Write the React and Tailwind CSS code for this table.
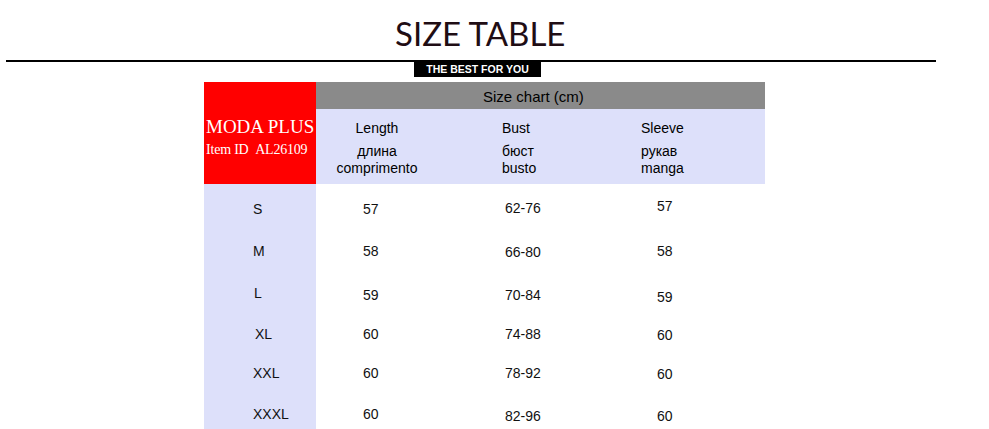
const rows = [
  { size: "S", len: "57", bust: "62-76", sleeve: "57", h: "h-[48px]", sizeCls: "pt-[2px]", lenCls: "pt-[2px]", bustCls: "", sleeveCls: "pb-[4px]" },
  { size: "M", len: "58", bust: "66-80", sleeve: "58", h: "h-[38px]", sizeCls: "", lenCls: "", bustCls: "pt-[1px]", sleeveCls: "" },
  { size: "L", len: "59", bust: "70-84", sleeve: "59", h: "h-[49px]", sizeCls: "pb-[3px] pl-[50px]", lenCls: "", bustCls: "pt-[1px]", sleeveCls: "pt-[4px]" },
  { size: "XL", len: "60", bust: "74-88", sleeve: "60", h: "h-[29px]", sizeCls: "pl-[51px]", lenCls: "", bustCls: "pt-[1px]", sleeveCls: "pt-[3px]" },
  { size: "XXL", len: "60", bust: "78-92", sleeve: "60", h: "h-[50px]", sizeCls: "", lenCls: "", bustCls: "", sleeveCls: "pt-[1px]" },
  { size: "XXXL", len: "60", bust: "82-96", sleeve: "60", h: "h-[31px]", sizeCls: "pl-[48px] pt-[1px]", lenCls: "pt-[1px]", bustCls: "pt-[5px]", sleeveCls: "pt-[5px]" },
]

const App = () => {
  return (
    <div className="w-[989px] h-[429px] overflow-hidden bg-white text-[#111] font-['Liberation_Sans',Arial,sans-serif]">
      {/* Title */}
      <div className="pt-[17px] pl-[395px] h-[60px]">
        <h1 className="text-[33px] leading-none font-normal text-[#1f0d14] font-['Lato',sans-serif]">
          SIZE TABLE
        </h1>
      </div>
      <div className="ml-[6px] w-[930px] h-[2px] bg-black" />
      <div className="ml-[414px] w-[127px] h-[15px] bg-black flex items-center justify-center">
        <span className="text-white text-[10.5px] font-bold leading-none">THE BEST FOR YOU</span>
      </div>

      {/* Table */}
      <div className="mt-[5px] ml-[204px]">
        <div className="flex">
          <div className="w-[112px] h-[102px] bg-[#ff0000] pl-[2px] pt-[34px] text-white font-['Liberation_Serif','Times_New_Roman',serif] whitespace-nowrap">
            <div className="text-[19px] leading-[21px]">MODA PLUS</div>
            <div className="mt-[5px] text-[14px] leading-[16px] tracking-[-0.2px]">Item ID&nbsp;&nbsp;AL26109</div>
          </div>
          <div className="w-[449px]">
            <div className="h-[27px] bg-[#8a8a8a] pl-[167px] pt-[4px] flex items-center text-[15px] text-black">
              Size chart (cm)
            </div>
            <div className="h-[75px] bg-[#dde0fa] flex pt-[11px] text-[14px] leading-[16px] text-black">
              <div className="w-[122px] text-center">
                <div>Length</div>
                <div className="mt-[7px]">длина</div>
                <div className="mt-[1px]">comprimento</div>
              </div>
              <div className="w-[203px] pl-[64px]">
                <div>Bust</div>
                <div className="mt-[7px]">бюст</div>
                <div className="mt-[1px]">busto</div>
              </div>
              <div>
                <div>Sleeve</div>
                <div className="mt-[7px]">рукав</div>
                <div className="mt-[1px]">manga</div>
              </div>
            </div>
          </div>
        </div>

        <div className="flex flex-col text-[14px] leading-[16px]">
          {rows.map((row) => (
            <div key={row.size} className={`flex ${row.h}`}>
              <div className={`w-[112px] bg-[#dde0fa] pl-[49px] flex items-center ${row.sizeCls}`}>{row.size}</div>
              <div className={`w-[189px] pl-[47px] flex items-center ${row.lenCls}`}>{row.len}</div>
              <div className={`w-[151px] flex items-center ${row.bustCls}`}>{row.bust}</div>
              <div className={`pl-[1px] flex items-center ${row.sleeveCls}`}>{row.sleeve}</div>
            </div>
          ))}
        </div>
      </div>
    </div>
  )
}

export default App
